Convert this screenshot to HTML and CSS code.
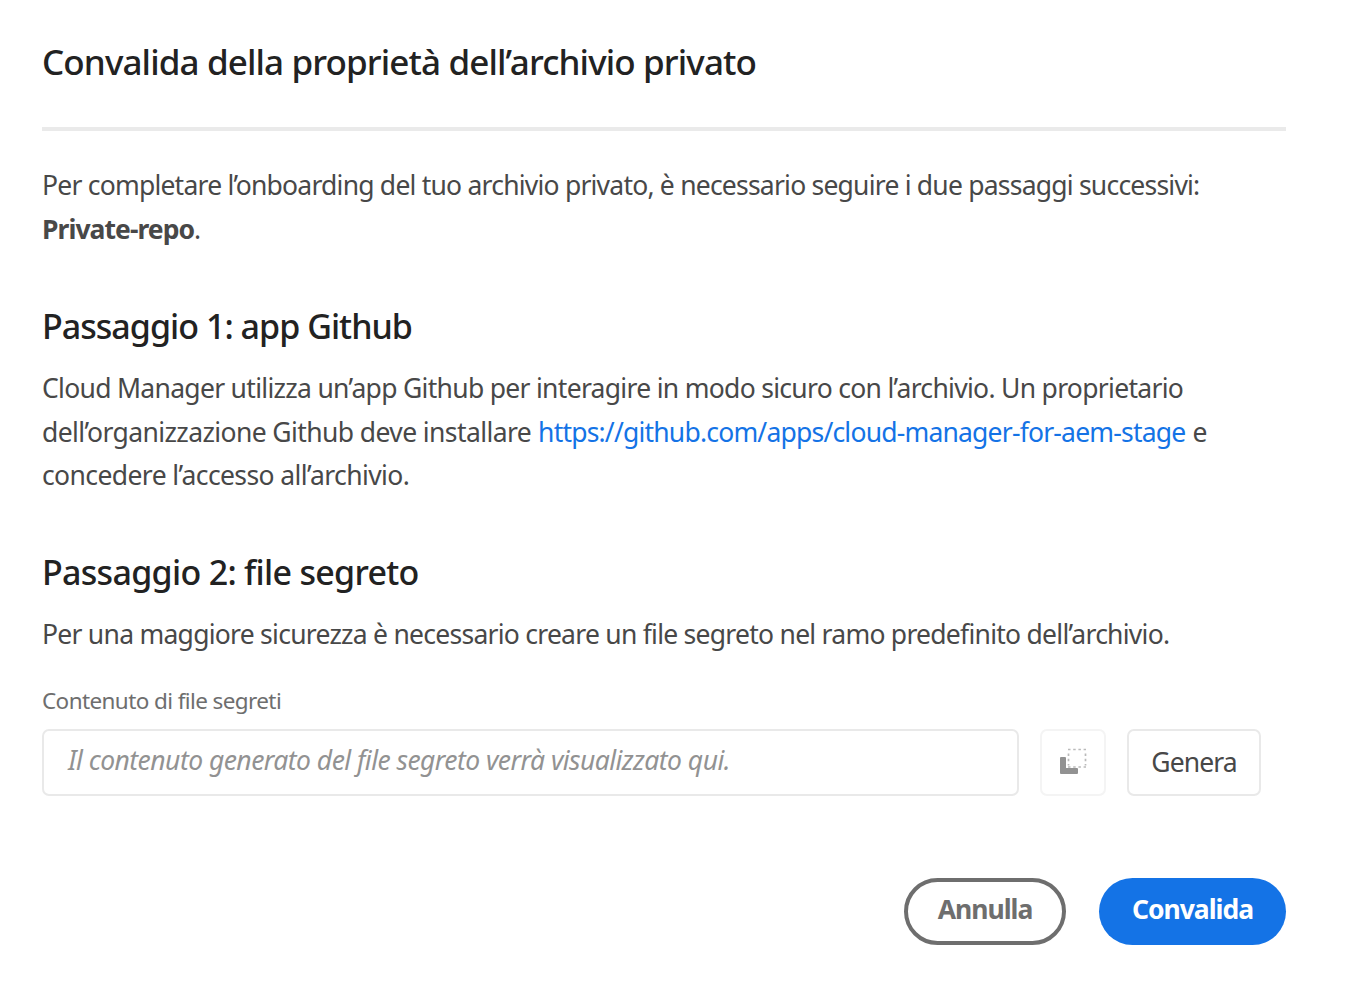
FILE: index.html
```html
<!DOCTYPE html>
<html lang="it">
<head>
<meta charset="utf-8">
<title>Convalida della proprietà dell’archivio privato</title>
<link rel="stylesheet" href="styles.css">
</head>
<body>
<main class="dialog">
  <h1 class="title">Convalida della proprietà dell’archivio privato</h1>
  <hr class="divider">
  <p class="intro"><span class="line i1">Per completare l’onboarding del tuo archivio privato, è necessario seguire i due passaggi successivi:</span><span class="line i2"><strong>Private-repo</strong>.</span></p>
  <h2 class="step first">Passaggio 1: app Github</h2>
  <p class="copy"><span class="line c1">Cloud Manager utilizza un’app Github per interagire in modo sicuro con l’archivio. Un proprietario</span><span class="line row"><span class="c2">dell’organizzazione Github deve installare</span><a class="link" href="#">https://github.com/apps/cloud-manager-for-aem-stage</a><span>e</span></span><span class="line c3">concedere l’accesso all’archivio.</span></p>
  <h2 class="step second">Passaggio 2: file segreto</h2>
  <p class="copy note"><span class="line n1">Per una maggiore sicurezza è necessario creare un file segreto nel ramo predefinito dell’archivio.</span></p>
  <div class="label">Contenuto di file segreti</div>
  <div class="field-row">
    <div class="field">Il contenuto generato del file segreto verrà visualizzato qui.</div>
    <button class="copy-button" aria-label="Copia"><svg width="28" height="28" viewBox="0 0 28 28"><path d="M2 9h4q1 0 1 1v10h11q1 0 1 1v4q0 1-1 1H2q-1 0-1-1V10q0-1 1-1z" fill="#929292"/><path d="M9 1.5h18M9 19h18" fill="none" stroke="#bababa" stroke-width="1.7" stroke-dasharray="2.5 2.7"/><path d="M9.5 5.5v12M26.5 5.5v12" fill="none" stroke="#bababa" stroke-width="1.7" stroke-dasharray="2.5 2.7"/></svg></button>
    <button class="generate">Genera</button>
  </div>
  <footer class="actions">
    <button class="pill cancel">Annulla</button>
    <button class="pill confirm">Convalida</button>
  </footer>
</main>
</body>
</html>
```
FILE: styles.css
```css
* { box-sizing: border-box; }
body { margin: 0; background: #fff; color: #484848; font-family: "Noto Sans", "Open Sans", sans-serif; }
.dialog { width: 1350px; height: 992px; padding: 39px 64px 0 42px; font-size: 26.5px; overflow: hidden; }
h1, h2, p { margin: 0; }
h1, h2 { color: #222; font-weight: 500; line-height: 46px; white-space: nowrap; }
.title { font-size: 35px; letter-spacing: -.88px; }
.divider { height: 4px; border: 0; margin: 42px 0 33px; background: #eaeaea; }
.line { display: block; line-height: 43.6px; white-space: nowrap; letter-spacing: -.7px; }
.i1 { letter-spacing: -.78px; }
.i2 { letter-spacing: -.95px; }
.step { margin-top: 52px; margin-bottom: 18px; font-size: 34px; letter-spacing: -.7px; }
.first { letter-spacing: -.97px; }
.second { margin-top: 51px; }
.row { display: flex; gap: 7px; }
.c2, .c3 { letter-spacing: -.6px; }
.link { color: #1473e6; text-decoration: none; letter-spacing: -.8px; }
.n1 { letter-spacing: -.74px; }
.label { margin-top: 25px; height: 38px; line-height: 38px; font-size: 22.5px; letter-spacing: -.6px; color: #6e6e6e; }
.field-row { display: flex; margin-top: 9px; }
.field { width: 977px; height: 67px; border: 2px solid #e9e9e9; border-radius: 7px; padding: 0 24px; line-height: 58px; font-style: italic; letter-spacing: -.54px; color: #929292; white-space: nowrap; }
button { font: inherit; padding: 0; background: white; }
.copy-button { margin-left: 21px; width: 66px; height: 67px; border: 2px solid #f4f4f4; border-radius: 7px; display: grid; place-items: center; }
.generate { margin-left: 21px; width: 134px; border: 2px solid #e9e9e9; border-radius: 7px; color: #484848; letter-spacing: -.9px; padding-bottom: 1px; }
.actions { display: flex; justify-content: flex-end; gap: 33px; margin-top: 82px; }
.pill { height: 67px; border-radius: 34px; font-weight: 700; letter-spacing: -1px; padding-bottom: 4px; }
.cancel { width: 162px; border: 4px solid #6e6e6e; color: #6e6e6e; }
.confirm { width: 187px; border: 0; background: #1473e6; color: #fff; }
```
